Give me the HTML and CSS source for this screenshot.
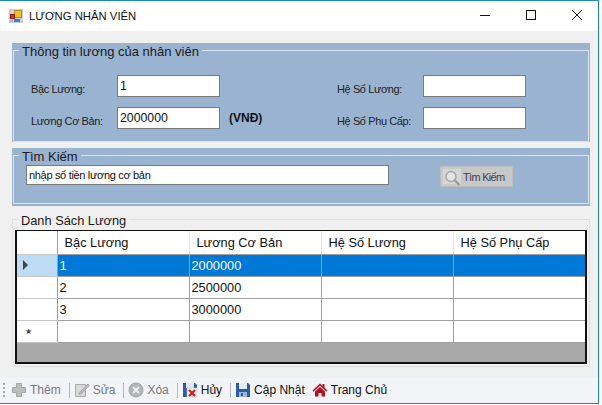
FILE: index.html
```html
<!DOCTYPE html>
<html lang="vi">
<head>
    <meta charset="UTF-8">
    <meta name="viewport" content="width=device-width, initial-scale=1.0">
    <title>LƯƠNG NHÂN VIÊN</title>
    <link rel="stylesheet" href="styles.css">
</head>
<body>
    <div class="window">
        <header class="titlebar">
            <svg class="app-icon" width="14" height="14" viewBox="0 0 14 14">
                <rect width="14" height="14" fill="#cfcfcf"/>
                <rect x="5.500" y="1.500" width="7" height="7" fill="#f5c02f" stroke="#b98a1c"/>
                <rect x="1.500" y="5.500" width="4" height="4" fill="#d8352a" stroke="#8e2019"/>
                <rect x="5" y="10" width="6" height="3" fill="#3f7fd0"/>
                <rect x="1" y="11" width="3" height="2" fill="#9db6d6"/>
            </svg>
            <span class="title">LƯƠNG NHÂN VIÊN</span>
            <div class="win-buttons">
                <svg width="12" height="12" viewBox="0 0 12 12"><path d="M1 6.500h10" stroke="#111" fill="none"/></svg>
                <svg width="12" height="12" viewBox="0 0 12 12"><rect x="1.500" y="1.500" width="9" height="9" stroke="#111" fill="none"/></svg>
                <svg width="12" height="12" viewBox="0 0 12 12"><path d="M1 1l10 10M11 1L1 11" stroke="#111" fill="none"/></svg>
            </div>
        </header>

        <main class="client">
            <section class="panel panel-info">
                <fieldset class="box">
                    <legend>Thông tin lương của nhân viên</legend>
                    <div class="form-grid">
                        <label>Bậc Lương:</label>
                        <div class="field big">1</div>
                        <span></span>
                        <label>Hệ Số Lương:</label>
                        <div class="field"></div>
                        <label>Lương Cơ Bản:</label>
                        <div class="field big">2000000</div>
                        <b class="unit">(VNĐ)</b>
                        <label>Hệ Số Phụ Cấp:</label>
                        <div class="field"></div>
                    </div>
                </fieldset>
            </section>

            <section class="panel panel-search">
                <fieldset class="box">
                    <legend>Tìm Kiếm</legend>
                    <div class="search-row">
                        <div class="field search-input">nhập số tiền lương cơ bản</div>
                        <div class="search-btn">
                            <span class="search-icon">
                                <svg width="18" height="17" viewBox="0 0 18 17">
                                    <circle cx="8" cy="7.500" r="5" fill="#e4e4e4" stroke="#a8a8a8" stroke-width="1.500"/>
                                    <path d="M11.500 11l5 5" stroke="#999" stroke-width="2.200"/>
                                </svg>
                            </span>
                            <span>Tìm Kiếm</span>
                        </div>
                    </div>
                </fieldset>
            </section>

            <fieldset class="list-box">
                <legend>Danh Sách Lương</legend>
                <div class="grid-wrap">
                    <table class="data">
                        <thead>
                            <tr><th class="rowhead"></th><th>Bậc Lương</th><th>Lương Cơ Bản</th><th>Hệ Số Lương</th><th>Hệ Số Phụ Cấp</th></tr>
                        </thead>
                        <tbody>
                            <tr class="selected">
                                <td class="rowhead"><span class="arrow"></span></td><td>1</td><td>2000000</td><td></td><td></td>
                            </tr>
                            <tr><td class="rowhead"></td><td>2</td><td>2500000</td><td></td><td></td></tr>
                            <tr><td class="rowhead"></td><td>3</td><td>3000000</td><td></td><td></td></tr>
                            <tr><td class="rowhead star">★</td><td></td><td></td><td></td><td></td></tr>
                        </tbody>
                    </table>
                </div>
            </fieldset>
        </main>

        <footer class="toolbar">
            <span class="grip"></span>
            <span class="tool off">
                <svg width="16" height="16" viewBox="0 0 16 16"><path d="M5.500 1.500h5v4h4v5h-4v4h-5v-4h-4v-5h4z" fill="#bdbdbd" stroke="#a5a5a5"/></svg>
                Thêm
            </span>
            <i class="sep"></i>
            <span class="tool off">
                <svg width="16" height="16" viewBox="0 0 16 16"><path d="M1.500 2.500h10v12h-10z" fill="#d9d9d9" stroke="#aaa"/><path d="M6 10l8-8 1.500 1.500-8 8-2.500 1z" fill="#bbb" stroke="#999" stroke-width=".7"/></svg>
                Sửa
            </span>
            <i class="sep"></i>
            <span class="tool off">
                <svg width="16" height="16" viewBox="0 0 16 16"><circle cx="8" cy="8" r="7" fill="#b4b4b4" stroke="#a0a0a0"/><path d="M5 5l6 6M11 5l-6 6" stroke="#eee" stroke-width="2"/></svg>
                Xóa
            </span>
            <i class="sep"></i>
            <span class="tool">
                <svg width="16" height="16" viewBox="0 0 16 16"><path d="M1 1h12l2 2v12H1z" fill="#2a5ea8"/><rect x="4" y="1" width="8" height="5" fill="#dfe6f0"/><rect x="5" y="6" width="10" height="9" fill="#f4f4f4" stroke="#bbb" stroke-width=".5"/><path d="M7 8l6 6M13 8l-6 6" stroke="#d8201c" stroke-width="2.400"/></svg>
                Hủy
            </span>
            <i class="sep"></i>
            <span class="tool">
                <svg width="16" height="16" viewBox="0 0 16 16"><path d="M1 1h12l2 2v12H1z" fill="#2a5ea8"/><rect x="4" y="1" width="8" height="6" fill="#e6ecf4"/><rect x="4" y="10" width="8" height="5" fill="#9db6d6"/><rect x="6" y="11" width="2" height="3" fill="#2a5ea8"/></svg>
                Cập Nhật
            </span>
            <span class="tool home">
                <svg width="16" height="16" viewBox="0 0 16 16"><path d="M8 1.500L0.500 8.500l1.200 1L8 3.800l6.300 5.700 1.200-1L12.500 5.700V2h-2v1.900z" fill="#b5101c"/><path d="M3 9.500L8 5l5 4.500V14.500H9.500V11h-3v3.500H3z" fill="#b5101c"/></svg>
                Trang Chủ
            </span>
        </footer>
    </div>
</body>
</html>
```

FILE: styles.css
```css
html, body {
    margin: 0;
    background-color: #fff;
}

body {
    width: 602px;
    height: 405px;
    overflow: hidden;
    font-family: "Liberation Sans", Arial, sans-serif;
    color: #111;
}

.window {
    width: 598px;
    height: 402px;
    border-top: 1px solid #1b86d8;
    border-right: 1px solid #1b86d8;
    border-bottom: 1px solid #1b86d8;
    display: flex;
    flex-direction: column;
}

/* title bar */
.titlebar {
    height: 30px;
    flex: none;
    display: flex;
    align-items: center;
    padding-left: 9px;
    background-color: #fff;
}

.title {
    margin-left: 6px;
    font-size: 11.300px;
}

.win-buttons {
    margin-left: auto;
    display: flex;
    gap: 34px;
    padding: 0 15px 2px 0;
}

/* client area */
.client {
    flex: 1;
    background-color: #f0f0f0;
    padding: 12px 0 0 12px;
    display: flex;
    flex-direction: column;
}

.panel {
    background-color: #9ab3d1;
    width: 578px;
    box-sizing: border-box;
    padding: 0 1px 0 1px;
}

.box {
    margin: -1px 0 0 0;
    padding: 0;
    border: 1px solid #dbe4ee;
    height: calc(100% + 1px);
    box-sizing: border-box;
    min-width: 0;
}

.box legend, .list-box legend {
    font-size: 13px;
    line-height: 15px;
    padding: 2px 3px 0 3px;
    margin-left: 5px;
    color: #1a1a1a;
}

.panel-info {
    height: 99px;
}

.panel-search {
    height: 58px;
    margin-top: 6px;
    border-bottom: 1px solid #8fb0d8;
    padding-bottom: 1px;
}

.form-grid {
    display: grid;
    grid-template-columns: 86px 103px 117px 86px 103px;
    grid-template-rows: 22px 22px;
    row-gap: 10px;
    align-items: center;
    padding: 16px 0 0 17px;
    font-size: 11px;
    letter-spacing: -0.400px;
}

.form-grid label {
    padding-top: 5px;
    color: #222;
    white-space: nowrap;
}

.unit {
    padding-left: 9px;
    font-size: 12px;
    letter-spacing: 0;
}

.field {
    box-sizing: border-box;
    height: 22px;
    background-color: #fff;
    border: 1px solid #7a7a7a;
    padding-left: 2px;
    line-height: 20px;
    font-size: 11px;
}

.field.big {
    font-size: 12.300px;
    letter-spacing: 0;
}

.search-row {
    display: flex;
    align-items: flex-start;
    padding: 1px 0 0 12px;
}

.search-input {
    width: 363px;
    height: 20px;
    line-height: 18px;
    letter-spacing: -0.320px;
}

.search-btn {
    margin-left: 51px;
    margin-top: 1px;
    width: 73px;
    height: 21px;
    box-sizing: border-box;
    border: 1px solid #bcbcbc;
    background-color: #c8c8c8;
    display: flex;
    align-items: center;
    gap: 2px;
    font-size: 11px;
    letter-spacing: -0.700px;
    white-space: nowrap;
    color: #3c3c5c;
}

.search-icon {
    margin-left: 2px;
    width: 18px;
    height: 15px;
    background-color: #d6d6d6;
    display: flex;
}

/* list */
.list-box {
    margin: 5px 0 0 0;
    padding: 2px 2px 0 2px;
    border: 1px solid #e0e0e0;
    width: 578px;
    height: 156px;
    box-sizing: border-box;
    min-width: 0;
}

.list-box legend {
    margin-left: 3px;
    font-size: 12.800px;
}

.grid-wrap {
    height: 134px;
    border: 2px solid #111;
    border-width: 1px 2px 2px 2px;
    background-color: #a9a9a9;
    box-sizing: border-box;
}

.data {
    border-collapse: collapse;
    table-layout: fixed;
    width: 100%;
    font-size: 12.800px;
    background-color: #fff;
}

.data th, .data td {
    height: 22px;
    padding: 0 0 0 2px;
    box-sizing: border-box;
    border: 1px solid #a0a0a0;
    text-align: left;
    font-weight: normal;
}

.data th {
    height: 23px;
    padding-left: 7px;
    border-color: #e4e4e4;
    border-bottom-color: #a0a0a0;
    border-top: 0;
}

.data tr > :first-child {
    border-left: 0;
}

.data tr > :last-child {
    border-right: 0;
}

.data .rowhead {
    width: 40px;
    padding: 0;
    border-color: #e4e4e4;
    border-bottom-color: #c8c8c8;
    border-right-color: #a0a0a0;
}

.selected td {
    background-color: #0078d7;
    color: #fff;
}

.selected td.rowhead {
    background-color: #bcdcf4;
}

.arrow {
    display: block;
    margin-left: 6px;
    width: 0;
    height: 0;
    border-left: 5px solid #444;
    border-top: 5px solid transparent;
    border-bottom: 5px solid transparent;
}

.data .star {
    font-family: "DejaVu Sans", sans-serif;
    font-size: 8px;
    padding-left: 8px;
    color: #444;
}

/* toolbar */
.toolbar {
    flex: none;
    height: 25px;
    box-sizing: border-box;
    padding: 0 0 1px 3px;
    background-color: #f2f4f7;
    display: flex;
    align-items: center;
    font-size: 12px;
}

.grip {
    width: 2px;
    height: 14px;
    margin-right: 4px;
    border-left: 2px dotted #a8a8a8;
}

.tool {
    display: flex;
    align-items: center;
    gap: 3px;
}

.tool.off {
    color: #7b7b7b;
}

.home {
    margin-left: 7px;
}

.sep {
    width: 1px;
    height: 15px;
    background-color: #b8b8b8;
    margin: 0 4px 0 8px;
}
```
